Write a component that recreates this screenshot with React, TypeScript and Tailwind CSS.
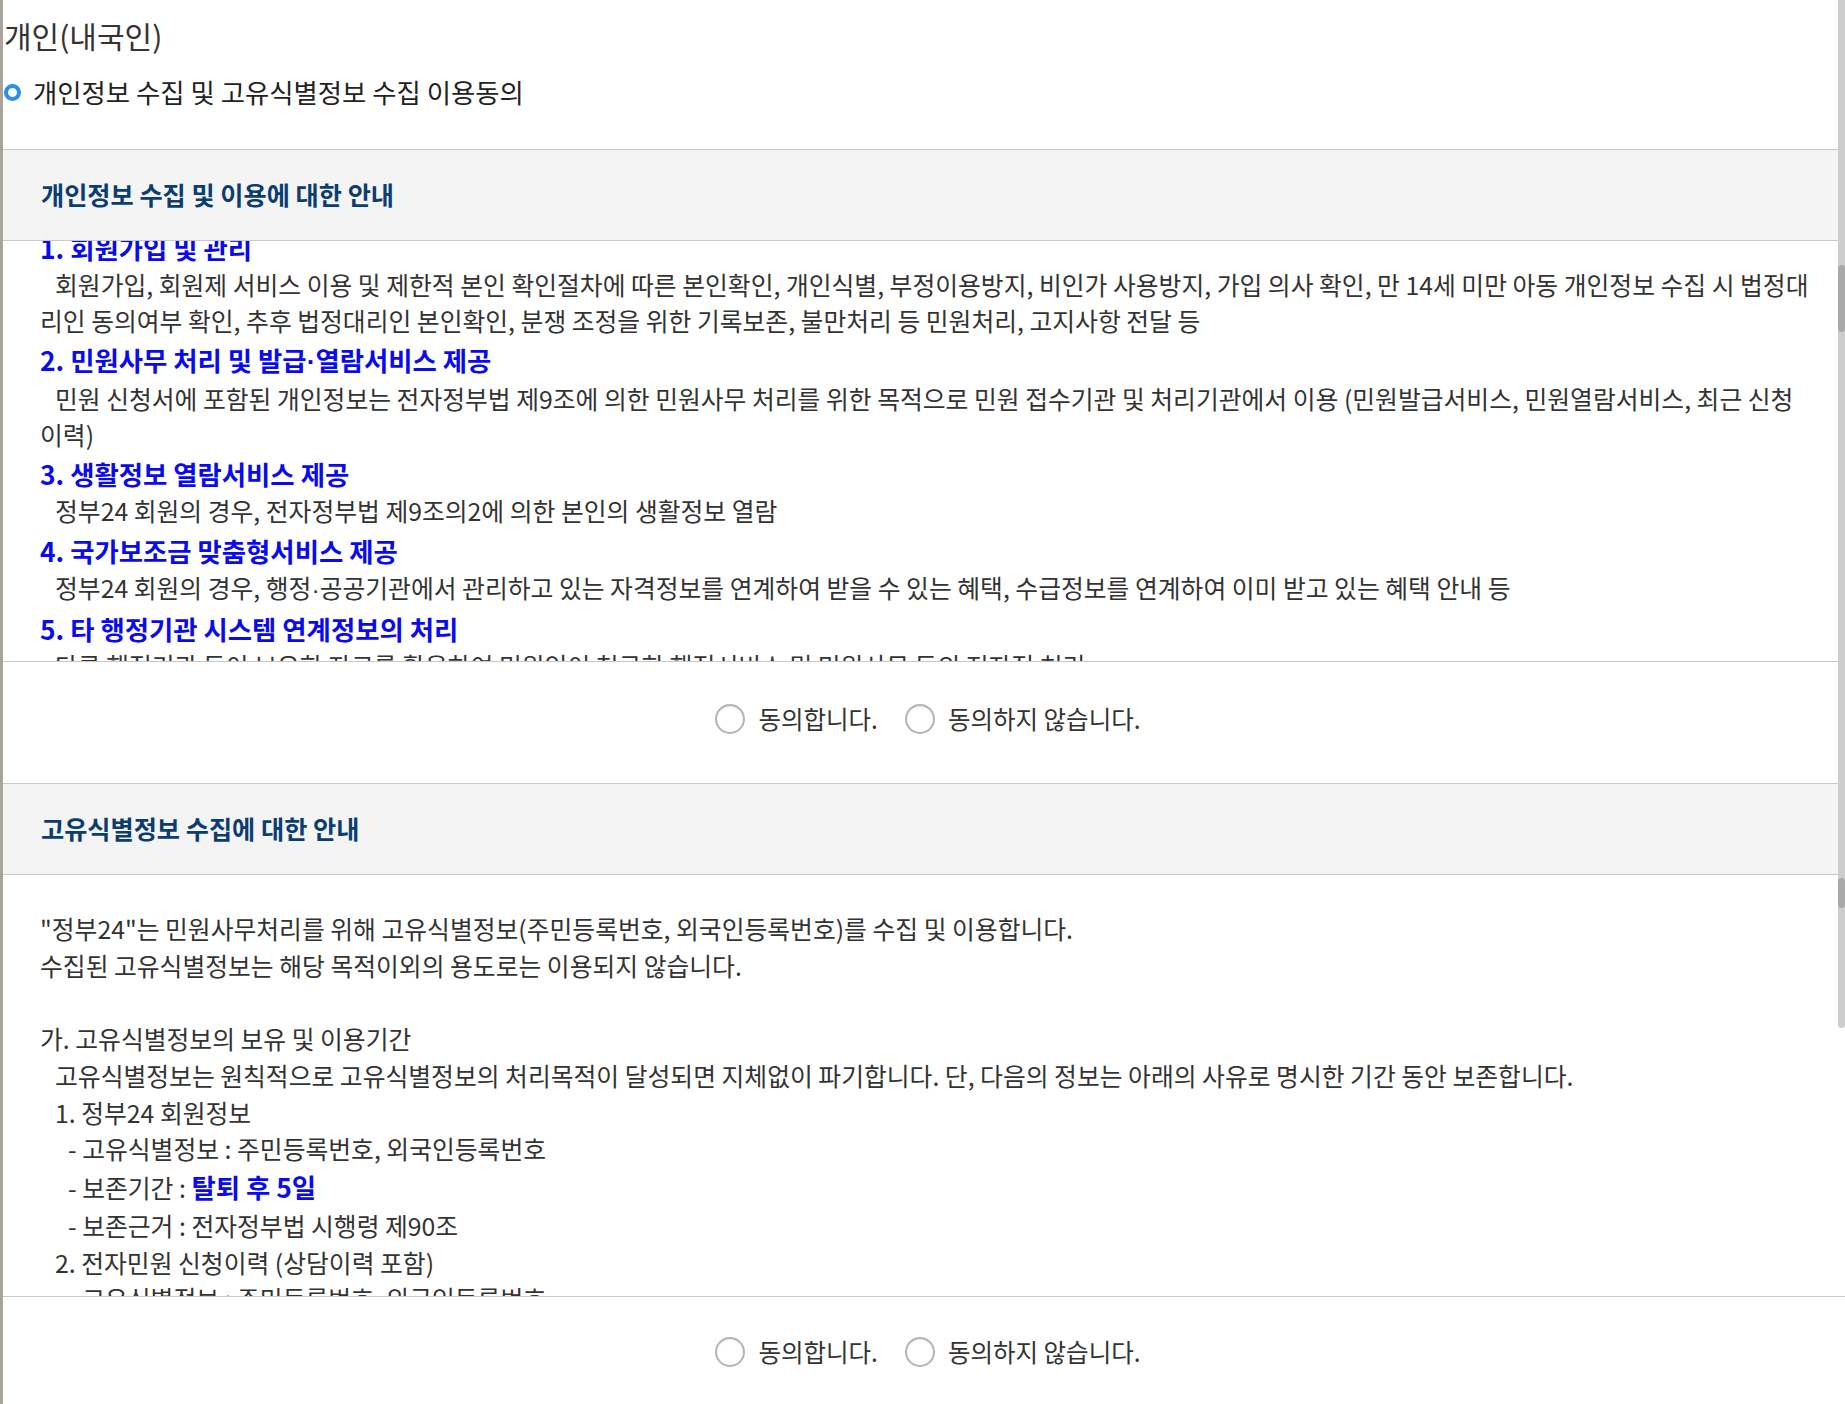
import React from 'react'

// narrow middle dot (the CJK font draws it full width)
const Dot = () => <span className="font-['Liberation_Sans',sans-serif]">·</span>

const firstItems: { title: React.ReactNode; lines: React.ReactNode[] }[] = [
  {
    title: '1. 회원가입 및 관리',
    lines: [
      '회원가입, 회원제 서비스 이용 및 제한적 본인 확인절차에 따른 본인확인, 개인식별, 부정이용방지, 비인가 사용방지, 가입 의사 확인, 만 14세 미만 아동 개인정보 수집 시 법정대',
      '리인 동의여부 확인, 추후 법정대리인 본인확인, 분쟁 조정을 위한 기록보존, 불만처리 등 민원처리, 고지사항 전달 등',
    ],
  },
  {
    title: (
      <>
        2. 민원사무 처리 및 발급<Dot />열람서비스 제공
      </>
    ),
    lines: [
      '민원 신청서에 포함된 개인정보는 전자정부법 제9조에 의한 민원사무 처리를 위한 목적으로 민원 접수기관 및 처리기관에서 이용 (민원발급서비스, 민원열람서비스, 최근 신청',
      '이력)',
    ],
  },
  {
    title: '3. 생활정보 열람서비스 제공',
    lines: ['정부24 회원의 경우, 전자정부법 제9조의2에 의한 본인의 생활정보 열람'],
  },
  {
    title: '4. 국가보조금 맞춤형서비스 제공',
    lines: [
      <>
        정부24 회원의 경우, 행정<Dot />공공기관에서 관리하고 있는 자격정보를 연계하여 받을 수 있는 혜택, 수급정보를 연계하여 이미 받고 있는 혜택 안내 등
      </>,
    ],
  },
  {
    title: '5. 타 행정기관 시스템 연계정보의 처리',
    lines: ['다른 행정기관 등이 보유한 자료를 활용하여 민원인이 청구한 행정서비스 및 민원사무 등의 전자적 처리'],
  },
]

function Radio({ label }: { label: string }) {
  return (
    <label className="flex items-center gap-[13px]">
      <span className="h-[30px] w-[30px] rounded-full border-2 border-[#b4b4b4] bg-white shadow-[inset_0_1px_2px_rgba(0,0,0,0.08)]" />
      <span className="text-[24.5px] leading-[30px] text-[#333]">{label}</span>
    </label>
  )
}

function AgreeRow({ className }: { className: string }) {
  return (
    <div className={`flex items-start justify-center gap-[27px] pl-[8px] ${className}`}>
      <Radio label="동의합니다." />
      <Radio label="동의하지 않습니다." />
    </div>
  )
}

export default function App() {
  return (
    <div className="relative flex h-[1404px] overflow-hidden bg-white font-['Noto_Sans_CJK_KR',sans-serif] text-[#333]">
      <div className="w-[3px] bg-[#aaa49e]" />
      <div className="flex flex-1 flex-col">
        <h1 className="pl-[1px] pt-[15px] text-[30px] leading-[40px] text-[#333]">개인(내국인)</h1>
        <div className="mt-[22px] flex h-[30px] items-center gap-[12px] pl-[1px]">
          <span className="h-[17px] w-[17px] rounded-full border-[4px] border-[#2b8ff0]" />
          <h2 className="text-[26.4px] text-[#222]">개인정보 수집 및 고유식별정보 수집 이용동의</h2>
        </div>

        <div className="mt-[42px]">
          <div className="flex h-[92px] items-center border-t border-b border-[#c8c8c8] bg-[#f4f4f4] pl-[38px]">
            <h3 className="text-[25.2px] font-bold text-[#0b3d70]">개인정보 수집 및 이용에 대한 안내</h3>
          </div>
          <div className="h-[421px] overflow-hidden border-b border-[#c8c8c8] pl-[37px]">
            <div className="-mt-[12px]">
              {firstItems.map((item, i) => (
                <div key={i} className={i === 0 ? '' : 'mt-[3px]'}>
                  <p className="whitespace-nowrap text-[26.4px] font-bold leading-[38px] text-[#0a0aef]">{item.title}</p>
                  {item.lines.map((line, j) => (
                    <p
                      key={j}
                      className={`whitespace-nowrap text-[24.8px] leading-[35.5px] text-[#333] ${j === 0 ? 'pl-[15px]' : ''}`}
                    >
                      {line}
                    </p>
                  ))}
                </div>
              ))}
            </div>
          </div>
          <AgreeRow className="h-[122px] pt-[42px]" />
        </div>

        <div>
          <div className="flex h-[92px] items-center border-b border-t border-[#c8c8c8] bg-[#f4f4f4] pl-[38px] -mt-px">
            <h3 className="text-[25.2px] font-bold text-[#0b3d70]">고유식별정보 수집에 대한 안내</h3>
          </div>
          <div className="h-[422px] overflow-hidden border-b border-[#c8c8c8] pl-[37px] pt-[35px] text-[24.8px] leading-[36.7px] text-[#333]">
            <p className="whitespace-nowrap">"정부24"는 민원사무처리를 위해 고유식별정보(주민등록번호, 외국인등록번호)를 수집 및 이용합니다.</p>
            <p className="whitespace-nowrap">수집된 고유식별정보는 해당 목적이외의 용도로는 이용되지 않습니다.</p>
            <p className="h-[36.7px]" />
            <p className="whitespace-nowrap">가. 고유식별정보의 보유 및 이용기간</p>
            <p className="whitespace-nowrap pl-[15px]">
              고유식별정보는 원칙적으로 고유식별정보의 처리목적이 달성되면 지체없이 파기합니다. 단, 다음의 정보는 아래의 사유로 명시한 기간 동안 보존합니다.
            </p>
            <p className="whitespace-nowrap pl-[15px]">1. 정부24 회원정보</p>
            <p className="whitespace-nowrap pl-[28px]">- 고유식별정보 : 주민등록번호, 외국인등록번호</p>
            <p className="whitespace-nowrap pl-[28px] leading-[40px]">
              - 보존기간 : <span className="text-[26.4px] font-bold text-[#0a0aef]">탈퇴 후 5일</span>
            </p>
            <p className="whitespace-nowrap pl-[28px]">- 보존근거 : 전자정부법 시행령 제90조</p>
            <p className="whitespace-nowrap pl-[15px]">2. 전자민원 신청이력 (상담이력 포함)</p>
            <p className="whitespace-nowrap pl-[28px]">- 고유식별정보 : 주민등록번호, 외국인등록번호</p>
          </div>
          <AgreeRow className="pt-[40px]" />
        </div>
      </div>

      {/* overlay scrollbars */}
      <div className="absolute right-0 top-0 h-[1028px] w-[7px] rounded-b-full bg-[#cdcdcd]" />
      <div className="absolute right-0 top-[265px] h-[67px] w-[7px] rounded-full bg-[#a9a9a9]" />
      <div className="absolute right-0 top-[878px] h-[30px] w-[7px] rounded-full bg-[#a9a9a9]" />
    </div>
  )
}
